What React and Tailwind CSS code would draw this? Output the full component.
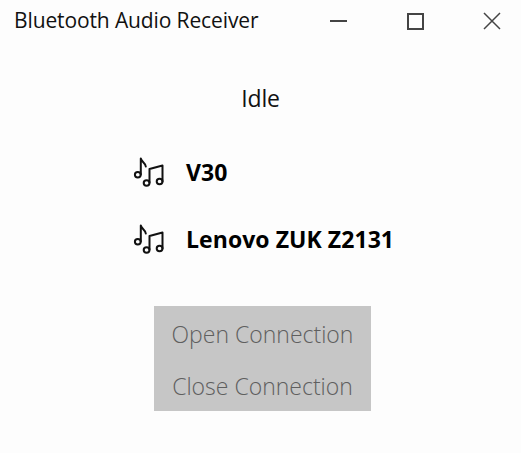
const MusicIcon = () => (
  <svg width="32" height="32" viewBox="0 0 32 32" fill="none" stroke="#111" strokeWidth="2" strokeLinecap="round" strokeLinejoin="round" className="shrink-0">
    <ellipse cx="4.8" cy="18.8" rx="2.9" ry="2.7" />
    <path d="M7.8 18.5V2.5c.5 3 4.6 4.2 5 8" />
    <ellipse cx="13.6" cy="27" rx="2.9" ry="2.7" />
    <path d="M16.5 26.5V13l13-3.5v16" />
    <ellipse cx="26.6" cy="25.5" rx="2.9" ry="2.7" />
  </svg>
);

const DeviceRow = ({ name }) => (
  <div className="flex items-center gap-[21px] h-8">
    <MusicIcon />
    <span className="text-[23px] font-bold text-black leading-none tracking-[0.06px]">{name}</span>
  </div>
);

export default function App() {
  return (
    <div className="w-[521px] h-[453px] bg-[#fdfdfd] flex flex-col font-['Open_Sans','Noto_Sans',sans-serif] overflow-hidden">
      <div className="h-[42px] flex items-center">
        <span className="pl-[14px] flex-1 text-[21px] text-[#111] whitespace-nowrap tracking-[-0.12px]">Bluetooth Audio Receiver</span>
        <div className="flex gap-[19px]">
          <div className="w-[58px] flex justify-center items-center">
            <div className="w-[17px] h-[2px] bg-[#444]" />
          </div>
          <div className="w-[58px] flex justify-center items-center">
            <div className="w-[17px] h-[17px] border-2 border-[#444]" />
          </div>
          <div className="w-[58px] flex justify-center items-center">
            <svg width="18" height="18" viewBox="0 0 18 18" stroke="#444" strokeWidth="1.5">
              <path d="M1 1l16 16M17 1L1 17" />
            </svg>
          </div>
        </div>
      </div>

      <div className="flex flex-col items-center">
        <div className="mt-[41px] text-[23px] leading-[30px] text-[#111] tracking-[-0.2px]">Idle</div>
        <div className="mt-[43px] ml-[133px] self-start flex flex-col gap-[35px]">
          <DeviceRow name="V30" />
          <DeviceRow name="Lenovo ZUK Z2131" />
        </div>
        <div className="mt-[51px] ml-1 w-[217px] h-[105px] bg-[#c6c6c6] flex flex-col items-center text-[23px] font-light text-[#5f5f5f]">
          <button className="h-[54px] pt-[2px] w-full flex items-center justify-center">Open Connection</button>
          <button className="h-[51px] pt-[1px] w-full flex items-center justify-center">Close Connection</button>
        </div>
      </div>
    </div>
  );
}
